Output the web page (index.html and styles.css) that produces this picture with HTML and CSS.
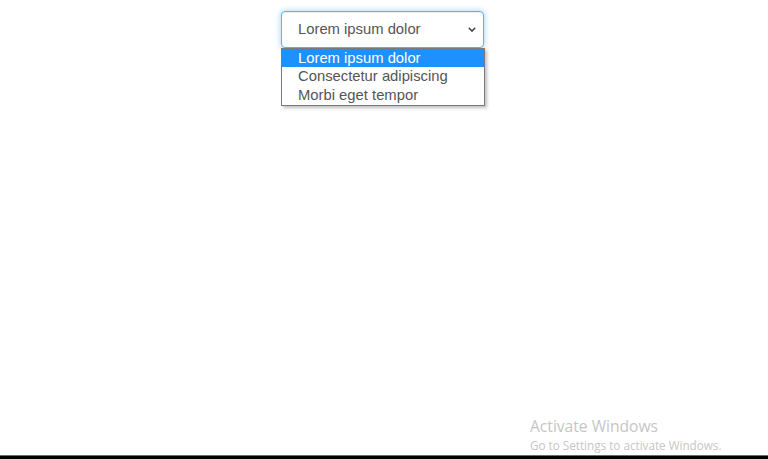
FILE: index.html
```html
<!DOCTYPE html>
<html lang="en">
<head>
<meta charset="utf-8">
<title>Select</title>
<link rel="stylesheet" href="styles.css">
</head>
<body>
<div class="page">
  <main class="stage">
    <div class="dropdown">
      <div class="select">
        <span class="select-value">Lorem ipsum dolor</span>
        <svg class="chevron" width="8" height="5" viewBox="0 0 8 5" aria-hidden="true">
          <path d="M0.8 0.8 L4 4 L7.2 0.8" fill="none" stroke="#444" stroke-width="1.6"/>
        </svg>
      </div>
      <ul class="options">
        <li class="option is-active">Lorem ipsum dolor</li>
        <li class="option">Consectetur adipiscing</li>
        <li class="option">Morbi eget tempor</li>
      </ul>
    </div>
  </main>
  <div class="taskbar"></div>
</div>
<div class="watermark">
  <div class="wm-title">Activate Windows</div>
  <div class="wm-sub">Go to Settings to activate Windows.</div>
</div>
</body>
</html>
```
FILE: styles.css
```css
html, body {
  margin: 0;
  padding: 0;
  background: #fff;
}
body {
  font-family: "Liberation Sans", Arial, sans-serif;
}
.page {
  min-height: 100vh;
  display: flex;
  flex-direction: column;
}
.stage {
  flex: 1;
  padding: 11px 0 0 281px;
}
.dropdown {
  position: relative;
  width: 203px;
}
.select {
  box-sizing: border-box;
  height: 37px;
  border: 1px solid #66afe9;
  border-radius: 4px;
  background: #fff;
  box-shadow: inset 0 1px 1px rgba(0,0,0,.075), 0 0 6px rgba(102,175,233,.6);
  display: flex;
  align-items: center;
  justify-content: space-between;
  padding: 0 7px 1px 16px;
  color: #555;
  font-size: 14.8px;
}
.chevron {
  display: block;
  margin-top: 1px;
}
.options {
  position: absolute;
  left: 0;
  top: 37px;
  width: 204px;
  box-sizing: border-box;
  margin: 0;
  padding: 0 0 1px;
  list-style: none;
  background: #fff;
  border: 1px solid #7a7a7a;
  box-shadow: 2px 2px 3px rgba(0,0,0,.25);
}
.option {
  height: 18.3px;
  line-height: 18px;
  padding-left: 16px;
  color: #555;
  font-size: 14.8px;
  white-space: nowrap;
}
.option.is-active {
  background: #1e90ff;
  color: #fff;
}
.taskbar {
  height: 3px;
  background: #000;
  border-top: 1px solid #6b6b6b;
}
.watermark {
  position: absolute;
  left: 530px;
  top: 417px;
  color: #c6c6c6;
  font-family: "Open Sans", "Noto Sans", sans-serif;
  line-height: 1.2;
}
.wm-title {
  font-size: 15.6px;
}
.wm-sub {
  font-size: 11.7px;
  margin-top: 2px;
}
```
